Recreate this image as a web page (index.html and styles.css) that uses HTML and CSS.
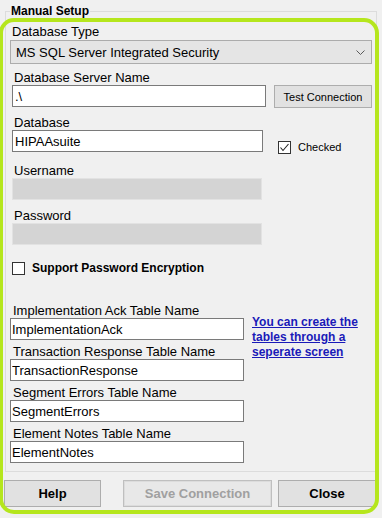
FILE: index.html
```html
<!DOCTYPE html>
<html lang="en">
<head>
  <meta charset="UTF-8" />
  <title>Manual Setup</title>
  <link rel="stylesheet" href="styles.css">
</head>
<body>
  <fieldset class="group">
    <legend>Manual Setup</legend>

    <label class="lbl lbl-type">Database Type</label>
    <div class="combo">
      <span>MS SQL Server Integrated Security</span>
      <svg class="chevron" width="9" height="5" viewBox="0 0 9 5"><polyline points="0.5,0.5 4.5,4.5 8.5,0.5" fill="none" stroke="#5a5a5a" stroke-width="1"/></svg>
    </div>

    <div class="field server">
      <label class="lbl">Database Server Name</label>
      <div class="row">
        <input class="txt txt-server" type="text" value=".\">
        <button class="btn-small">Test Connection</button>
      </div>
    </div>

    <div class="field db">
      <label class="lbl">Database</label>
      <div class="row">
        <input class="txt txt-db" type="text" value="HIPAAsuite">
        <span class="check check-db">
          <span class="box"><svg width="11" height="11" viewBox="0 0 11 11"><polyline points="1.5,5.5 4,8.5 9.5,2" fill="none" stroke="#222" stroke-width="1.1"/></svg></span>
          Checked
        </span>
      </div>
    </div>

    <div class="field">
      <label class="lbl">Username</label>
      <input class="txt txt-off" type="text" disabled>
    </div>

    <div class="field pass">
      <label class="lbl">Password</label>
      <input class="txt txt-off" type="password" disabled>
    </div>

    <div class="check check-encrypt">
      <span class="box"></span>
      Support Password Encryption
    </div>

    <div class="tables">
      <div class="tables-col">
        <label class="lbl lbl-table">Implementation Ack Table Name</label>
        <input class="txt txt-table" type="text" value="ImplementationAck">
        <label class="lbl lbl-table">Transaction Response Table Name</label>
        <input class="txt txt-table" type="text" value="TransactionResponse">
        <label class="lbl lbl-table">Segment Errors Table Name</label>
        <input class="txt txt-table" type="text" value="SegmentErrors">
        <label class="lbl lbl-table">Element Notes Table Name</label>
        <input class="txt txt-table" type="text" value="ElementNotes">
      </div>
      <a class="tables-link" href="#">You can create the<br>tables through a<br>seperate screen</a>
    </div>
  </fieldset>

  <div class="buttons">
    <button class="btn btn-help">Help</button>
    <button class="btn btn-save" disabled>Save Connection</button>
    <button class="btn btn-close">Close</button>
  </div>

  <!-- highlight drawn over the dialog -->
  <div class="highlight"></div>
</body>
</html>
```

FILE: styles.css
```css
* {
  box-sizing: border-box;
}

html, body {
  margin: 0;
}

body {
  position: relative;
  width: 382px;
  height: 518px;
  overflow: hidden;
  background: #f0f0f0;
  color: #000;
  font-family: 'Liberation Sans', Arial, sans-serif;
  font-size: 13px;
}

.group {
  margin: 4px 5px 0;
  padding: 6px 4px 0;
  height: 468px;
  border: 1px solid #dcdcdc;
  min-width: 0;
}

.group legend {
  font-size: 12px;
  font-weight: bold;
  line-height: 14px;
  padding: 0 1px;
  margin: 0;
}

.lbl {
  display: block;
  line-height: 15px;
  padding-left: 4px;
}

.lbl-type {
  line-height: 16px;
  padding-left: 2px;
}

.combo {
  height: 24px;
  border: 1px solid #acacac;
  background: #e5e5e5;
  display: flex;
  align-items: center;
  justify-content: space-between;
  padding: 0 6px 0 5px;
}

.field {
  margin-top: 9px;
}

.field.server {
  margin-top: 6px;
}

.field.db {
  margin-top: 7px;
}

.field.pass {
  margin-top: 8px;
}

.row {
  display: flex;
  align-items: flex-start;
}

.txt {
  display: block;
  height: 22px;
  margin: 0 0 0 2px;
  padding: 0 2px;
  border: 1px solid #7a7a7a;
  background: #fff;
  color: #000;
  font-family: inherit;
  font-size: 13px;
  outline: none;
}

.txt-server {
  width: 254px;
}

.txt-db {
  width: 251px;
}

.txt-off {
  width: 250px;
  background: #d4d4d4;
  border-color: #e2e2e2;
}

.btn-small {
  width: 98px;
  height: 23px;
  margin-left: 8px;
  padding: 0;
  border: 1px solid #adadad;
  background: #e1e1e1;
  color: #000;
  font-family: inherit;
  font-size: 11px;
}

.check {
  display: flex;
  align-items: center;
  gap: 7px;
}

.check .box {
  width: 13px;
  height: 13px;
  border: 1px solid #333;
  background: #fff;
  display: flex;
  align-items: center;
  justify-content: center;
}

.check-db {
  margin: 11px 0 0 15px;
  font-size: 11px;
  line-height: 13px;
}

.check-encrypt {
  margin: 17px 0 0 2px;
  font-size: 12px;
  font-weight: bold;
  line-height: 13px;
}

.tables {
  display: flex;
  align-items: flex-start;
  margin-top: 28px;
}

.tables-col {
  display: flex;
  flex-direction: column;
}

.lbl-table {
  padding-left: 3px;
}

.txt-table {
  width: 234px;
  margin: 0 0 4px;
  padding: 0 1px;
}

.tables-link {
  margin: 12px 0 0 8px;
  color: #1a1ab8;
  font-size: 12px;
  font-weight: bold;
  line-height: 15px;
}

.buttons {
  display: flex;
  margin-top: 8px;
  padding-left: 4px;
}

.btn {
  height: 27px;
  padding: 0;
  border: 1px solid #adadad;
  background: #e1e1e1;
  color: #000;
  font-family: inherit;
  font-size: 13px;
  font-weight: bold;
}

.btn-help {
  width: 97px;
}

.btn-save {
  width: 149px;
  margin-left: 22px;
  border-color: #bfbfbf;
  background: #e8e8e8;
  color: #a0a0a0;
  box-shadow: inset 0 0 0 1px #dcdcdc;
}

.btn-close {
  width: 98px;
  margin-left: 6px;
}

.highlight {
  position: absolute;
  left: -1px;
  top: 18px;
  width: 380px;
  height: 496px;
  border: 4px solid #b5e61d;
  border-radius: 15px;
  pointer-events: none;
}
```
